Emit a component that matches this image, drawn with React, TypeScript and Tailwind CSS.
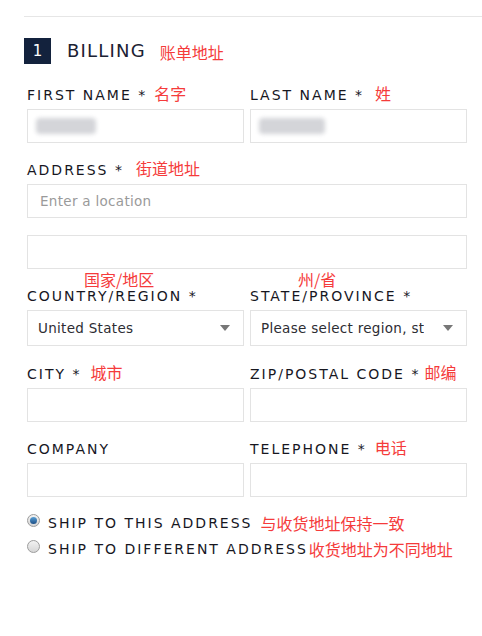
import type { ReactNode } from 'react';

const font = { fontFamily: '"DejaVu Sans", "Noto Sans CJK SC", sans-serif' };

// 红色的中文注释
function Note({ children, className = '' }: { children: ReactNode; className?: string }) {
  return (
    <span
      className={`text-[16px] leading-none text-[#f53b3b] tracking-normal whitespace-nowrap ${className}`}
      style={{ fontFamily: '"Noto Sans CJK SC", sans-serif' }}
    >
      {children}
    </span>
  );
}

function Label({ children, note, noteClass = 'ml-2' }: { children: ReactNode; note?: ReactNode; noteClass?: string }) {
  return (
    <div className="flex items-baseline h-5 text-[14px] leading-5 tracking-[2px] text-[#17171f] uppercase whitespace-nowrap">
      <span>{children}</span>
      {note && <Note className={noteClass}>{note}</Note>}
    </div>
  );
}

function TextBox({ children }: { children?: ReactNode }) {
  return (
    <div className="mt-1 h-[34px] border border-[#e3e3e3] bg-white flex items-center px-2 text-[13.5px] tracking-[0.3px] text-[#9a9a9a]">
      {children}
    </div>
  );
}

function SelectBox({ value }: { value: string }) {
  return (
    <div className="mt-1 h-[36px] border border-[#e3e3e3] bg-white flex items-center justify-between pl-[10px] pr-[13px] text-[13.5px] tracking-[0.3px] text-[#2d2d33]">
      <span className="truncate">{value}</span>
      <svg width="10" height="6" viewBox="0 0 10 6" className="shrink-0 ml-4">
        <path d="M0 0h10L5 6z" fill="#777" />
      </svg>
    </div>
  );
}

function Blur({ w }: { w: number }) {
  return (
    <div
      className="h-[16px] rounded-sm bg-[#d4d5d9] blur-[2px]"
      style={{ width: w }}
    />
  );
}

function Radio({ checked }: { checked?: boolean }) {
  return (
    <span className="mt-[1px] w-[13px] h-[13px] rounded-full border border-[#9c9c9c] bg-gradient-to-b from-[#f2f2f2] to-[#d6d6d6] flex items-center justify-center shrink-0">
      {checked && <span className="w-[7px] h-[7px] rounded-full bg-gradient-to-b from-[#5aa1d6] to-[#1d4f86]" />}
    </span>
  );
}

export default function App() {
  return (
    <div className="w-[482px] h-[636px] bg-white pt-4" style={font}>
      <div className="ml-6 border-t border-[#e6e6e6]" />

      <div className="pl-6 pr-[15px]">
        {/* Billing heading */}
        <div className="mt-[21px] flex items-center">
          <div className="w-[27px] h-[26px] bg-[#13223d] text-white text-[15px] flex items-center justify-center">1</div>
          <span className="ml-4 text-[18px] tracking-[1.2px] text-[#1b2233] -mt-[2px]">BILLING</span>
          <Note className="ml-[14px] mt-[2px]">账单地址</Note>
        </div>

        <div className="pl-[3px] mt-[21px]">
          <div className="grid grid-cols-2 gap-x-[6px]">
            <div>
              <Label note="名字" noteClass="ml-[7px]">FIRST NAME *</Label>
              <TextBox><Blur w={60} /></TextBox>
            </div>
            <div>
              <Label note="姓" noteClass="ml-[11px]">LAST NAME *</Label>
              <TextBox><Blur w={66} /></TextBox>
            </div>
          </div>

          <div className="mt-[17px]">
            <Label note="街道地址" noteClass="ml-3">ADDRESS *</Label>
            <TextBox>
              <span className="pl-1">Enter a location</span>
            </TextBox>
            <div className="mt-[17px] h-[34px] border border-[#e3e3e3]" />
          </div>

          <div className="grid grid-cols-2 gap-x-[6px] mt-[17px]">
            <div className="relative">
              <Note className="absolute left-[57px] -top-[15px]">国家/地区</Note>
              <Label>COUNTRY/REGION *</Label>
              <SelectBox value="United States" />
            </div>
            <div className="relative">
              <Note className="absolute left-[48px] -top-[15px]">州/省</Note>
              <Label>STATE/PROVINCE *</Label>
              <SelectBox value="Please select region, st" />
            </div>
          </div>

          <div className="grid grid-cols-2 gap-x-[6px] mt-[18px]">
            <div>
              <Label note="城市" noteClass="ml-[9px]">CITY *</Label>
              <TextBox />
            </div>
            <div>
              <Label note="邮编" noteClass="ml-[4px]">ZIP/POSTAL CODE *</Label>
              <TextBox />
            </div>
          </div>

          <div className="grid grid-cols-2 gap-x-[6px] mt-[17px]">
            <div>
              <Label>COMPANY</Label>
              <TextBox />
            </div>
            <div>
              <Label note="电话" noteClass="ml-2">TELEPHONE *</Label>
              <TextBox />
            </div>
          </div>

          <div className="mt-[16px] flex flex-col gap-[6px] text-[14px] tracking-[2px] text-[#17171f]">
            <div className="flex items-start">
              <Radio checked />
              <span className="ml-2 leading-5">SHIP TO THIS ADDRESS</span>
              <Note className="ml-2 mt-[2px]">与收货地址保持一致</Note>
            </div>
            <div className="flex items-start">
              <Radio />
              <span className="ml-2 leading-5">SHIP TO DIFFERENT ADDRESS</span>
              <Note className="ml-[1px] mt-[2px]">收货地址为不同地址</Note>
            </div>
          </div>
        </div>
      </div>
    </div>
  );
}
